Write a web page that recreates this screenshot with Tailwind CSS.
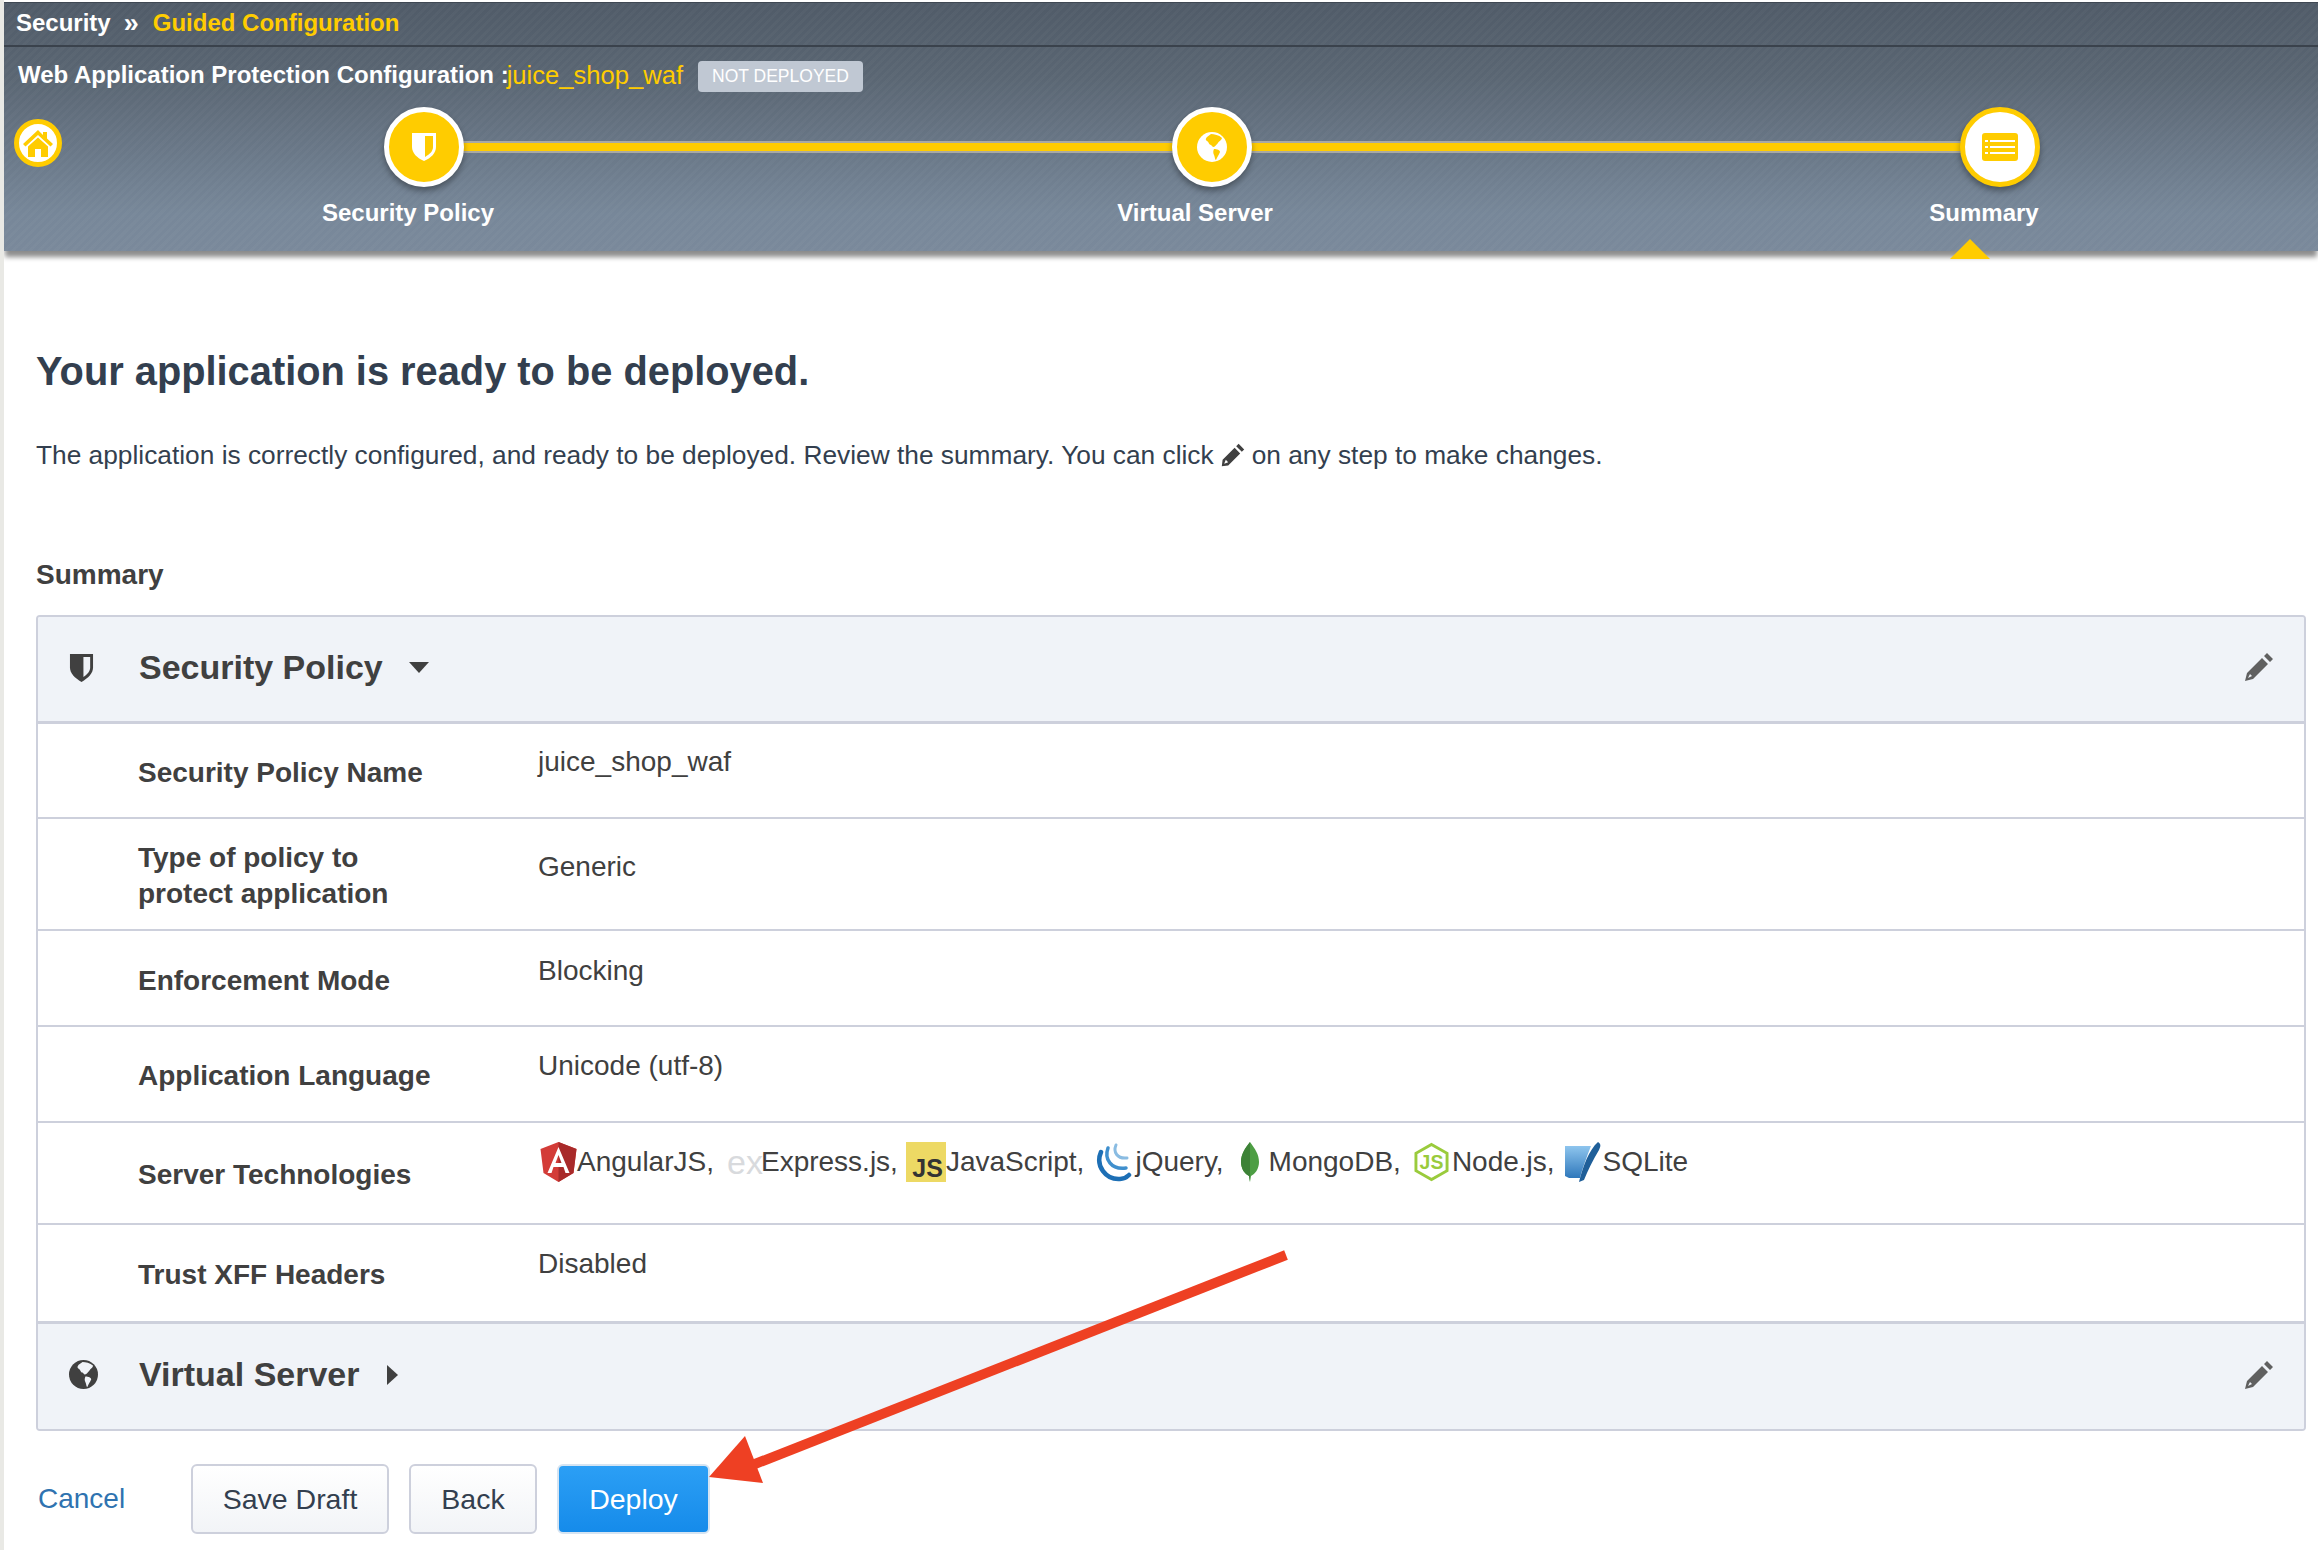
<!DOCTYPE html>
<html lang="en">
<head>
    <meta charset="UTF-8">
    <title>Guided Configuration</title>
    <script src="https://cdn.jsdelivr.net/npm/@tailwindcss/browser@4"></script>
</head>
<body class="bg-white">
<div class="relative w-[2318px] h-[1550px] overflow-hidden border-l-4 border-[#e9e9e5] bg-white font-['Liberation_Sans',Arial,sans-serif] antialiased text-[#404040]">

    <!-- Wizard header -->
    <header class="relative mt-[2px] h-[249px] border-t border-[#3f4853] text-white shadow-[0_7px_5px_-1px_rgba(0,0,0,0.45)] bg-[repeating-linear-gradient(135deg,rgba(255,255,255,0.025)_0,rgba(255,255,255,0.025)_3px,transparent_3px,transparent_6px),linear-gradient(180deg,#505b68_0%,#5a6673_30%,#778799_85%,#7a899b_100%)]">
        <div class="flex items-center h-[44px] pl-[12px] pb-[3px] border-b-2 border-[#3a424c] text-[24px] font-bold">
            <span>Security</span>
            <span class="ml-[13px] text-[27px] leading-[24px]">»</span>
            <span class="ml-[14px] text-[#ffcc00]">Guided Configuration</span>
        </div>
        <div class="flex items-center h-[44px] mt-[6px] pl-[14px] text-[24px]">
            <span class="font-bold">Web Application Protection Configuration :</span>
            <span class="-ml-[2px] text-[#ffcc00] text-[25.6px]">juice_shop_waf</span>
            <span class="ml-[15px] mt-[2px] flex items-center h-[31px] px-[14px] rounded-[4px] bg-[#c0c8d3] text-[17.5px] text-white">NOT DEPLOYED</span>
        </div>

        <!-- Steps -->
        <div class="flex items-center h-[80px] mt-[10px]">
            <div class="ml-[10px] w-[48px] h-[48px] -mt-[8px] rounded-full bg-white border-[5px] border-[#ffcc00] flex items-center justify-center">
                <svg viewBox="0 0 32 32" class="w-[32px] h-[32px]" fill="#ffcc00"><path d="M16 3 1 17l2.5 2.500L16 8l12.500 11.500L31 17l-6-5.500V5h-4v3z"/><path d="M6 19.500 16 10.500l10 9V30h-7v-8h-6v8H6z"/></svg>
            </div>
            <div class="ml-[322px] w-[80px] h-[80px] rounded-full bg-[#ffcc00] border-[5px] border-white shadow-[0_4px_6px_rgba(0,0,0,0.35)] flex items-center justify-center shrink-0 z-10">
                <svg viewBox="0 0 26 30" class="w-[26px] h-[30px]"><path fill="white" d="M1 1h24v14c0 6-5 11-12 14C6 26 1 21 1 15z"/><path fill="#ffcc00" d="M14 4h8v11c0 4-3 7-8 10z"/></svg>
            </div>
            <div class="w-[710px] h-[12px] -mx-[1px] shrink-0 bg-[#ffcc00] border-y-2 border-[#a9a9a3]"></div>
            <div class="w-[80px] h-[80px] rounded-full bg-[#ffcc00] border-[5px] border-white shadow-[0_4px_6px_rgba(0,0,0,0.35)] flex items-center justify-center shrink-0 z-10">
                <svg viewBox="0 0 30 30" class="w-[30px] h-[30px]"><circle cx="15" cy="15" r="15" fill="white"/><path fill="#ffcc00" d="M14 2c3 0 8 1 11 4-1 3-3 3-4 5-2 2-3 4-5 4l-2-2c-2 0-2-3-4-4s-1-3 0-4z"/><path fill="#ffcc00" d="M17 17c3 0 6 1 6 3-1 3-3 5-4 8-1 0-1-3-2-5s-1-4 0-6z"/></svg>
            </div>
            <div class="w-[710px] h-[12px] -mx-[1px] shrink-0 bg-[#ffcc00] border-y-2 border-[#a9a9a3]"></div>
            <div class="w-[80px] h-[80px] rounded-full bg-white border-[5px] border-[#ffcc00] shadow-[0_4px_6px_rgba(0,0,0,0.35)] flex items-center justify-center shrink-0 z-10">
                <svg viewBox="0 0 36 28" class="w-[36px] h-[28px]"><rect width="36" height="28" rx="3" fill="#ffcc00"/><path fill="white" d="M3 7h3v2H3zm5 0h25v2H8zM3 13h3v2H3zm5 0h25v2H8zM3 19h3v2H3zm5 0h25v2H8z"/></svg>
            </div>
        </div>
        <div class="flex text-[24px] font-bold mt-[8px] ml-[254px]">
            <div class="w-[787px]"><span class="block w-[300px] text-center">Security Policy</span></div>
            <div class="w-[789px]"><span class="block w-[300px] text-center">Virtual Server</span></div>
            <div><span class="block w-[300px] text-center">Summary</span></div>
        </div>
        <div class="absolute left-[1946px] bottom-[-8px] w-0 h-0 border-x-[20px] border-x-transparent border-b-[20px] border-b-[#ffcc00]"></div>
    </header>

    <!-- Main content -->
    <main class="pl-[32px] pr-[12px]">
        <h1 class="mt-[98px] text-[39.8px] leading-[44px] font-bold text-[#333f4f]">Your application is ready to be deployed.</h1>
        <p class="mt-[44px] text-[26.3px] leading-[36px] text-[#333f4f] flex items-center">
            The application is correctly configured, and ready to be deployed. Review the summary. You can click
            <svg viewBox="0 0 30 30" class="mx-[7px] w-[24px] h-[24px]" fill="#404040"><path d="M22 1l7 7-3 3-7-7zM17 6l7 7L9 28l-8 1 1-8zM6 21l-2 5 5-2z"/></svg>
            on any step to make changes.
        </p>
        <h2 class="mt-[86px] text-[28px] leading-[32px] font-bold">Summary</h2>

        <section class="mt-[24px] border-2 border-[#cdd0dc] rounded-[4px] overflow-hidden">
            <div class="flex items-center h-[107px] pb-[4px] pl-[31px] pr-[30px] bg-[#f0f3f8] border-b-[3px] border-[#cdd0dc]">
                <svg viewBox="0 0 26 30" class="w-[25px] h-[29px]" fill="#404040"><path d="M1 1h24v14c0 6-5 11-12 15C6 26 1 21 1 15z"/><path fill="#f0f3f8" d="M15 4h7v11c0 4-3 7-7 10z"/></svg>
                <span class="ml-[45px] text-[34px] font-bold">Security Policy</span>
                <span class="ml-[26px] w-0 h-0 border-x-[10px] border-x-transparent border-t-[11px] border-t-[#404040]"></span>
                <svg viewBox="0 0 30 30" class="ml-auto w-[30px] h-[30px]" fill="#606060"><path d="M23 1l6 6-3 3-6-6zM18 6l6 6L9 27l-8 2 2-8zM6 22l-2 4 4-2z"/></svg>
            </div>

            <div class="grid grid-cols-[400px_1fr] items-center h-[95px] pl-[100px] border-b-2 border-[#cdd0dc]">
                <span class="pt-[4px] text-[28px] font-bold">Security Policy Name</span>
                <span class="text-[28px] mb-[18px]">juice_shop_waf</span>
            </div>
            <div class="grid grid-cols-[400px_1fr] items-center h-[112px] pl-[100px] border-b-2 border-[#cdd0dc]">
                <span class="pt-[4px] text-[28px] leading-[36px] font-bold">Type of policy to<br>protect application</span>
                <span class="text-[28px] mb-[14px]">Generic</span>
            </div>
            <div class="grid grid-cols-[400px_1fr] items-center h-[96px] pl-[100px] border-b-2 border-[#cdd0dc]">
                <span class="pt-[6px] text-[28px] font-bold">Enforcement Mode</span>
                <span class="text-[28px] mb-[15px]">Blocking</span>
            </div>
            <div class="grid grid-cols-[400px_1fr] items-center h-[96px] pl-[100px] border-b-2 border-[#cdd0dc]">
                <span class="pt-[4px] text-[28px] font-bold">Application Language</span>
                <span class="text-[28px] mb-[17px]">Unicode (utf-8)</span>
            </div>
            <div class="grid grid-cols-[400px_1fr] items-center h-[102px] pl-[100px] border-b-2 border-[#cdd0dc]">
                <span class="pt-[4px] text-[28px] font-bold">Server Technologies</span>
                <div class="flex items-center text-[28px] mb-[22px]">
                    <svg viewBox="0 0 36 40" class="ml-[2px] w-[37px] h-[40px] shrink-0"><path fill="#d33c38" d="M18 0 36 7l-3 24-15 9-15-9L0 7z"/><path fill="#a82a2a" d="M18 0 36 7l-3 24-15 9z"/><path fill="white" d="M18 5 7 31h4l2-6h10l2 6h4zm-3 16 3-8 3 8z"/></svg>
                    <span>AngularJS,</span>
                    <span class="ml-[13px] w-[34px] shrink-0 text-[34px] leading-[34px] text-[#d8dadd]">ex</span>
                    <span>Express.js,</span>
                    <span class="ml-[8px] w-[40px] h-[40px] shrink-0 bg-[#edd964] flex items-end justify-end pr-[3px] text-[25px] leading-[27px] font-bold text-[#333]">JS</span>
                    <span>JavaScript,</span>
                    <svg viewBox="0 0 36 40" class="ml-[12px] w-[36px] h-[40px] shrink-0" fill="none" stroke-linecap="round"><path stroke="#1d6fb5" stroke-width="4.500" d="M5 10C-1 24 10 38 24 37c4 0 7-2 9-4"/><path stroke="#3f8fcd" stroke-width="3.500" d="M12 6C8 17 15 28 30 26"/><path stroke="#8abce2" stroke-width="3" d="M20 3c-3 7 1 14 11 13"/></svg>
                    <span class="ml-[3px]">jQuery,</span>
                    <svg viewBox="0 0 18 40" class="ml-[17px] w-[18px] h-[40px] shrink-0"><path fill="#4d9e44" d="M9 0C14 7 18 12 18 20c0 7-4 12-8 14l-1 6-1-6C4 32 0 27 0 20 0 12 5 6 9 0z"/><path fill="#3d8237" d="M9 0C4 6 0 12 0 20c0 7 4 12 8 14l1 6z"/></svg>
                    <span class="ml-[10px]">MongoDB,</span>
                    <svg viewBox="0 0 36 40" class="ml-[13px] w-[35px] h-[40px] shrink-0" fill="none"><path stroke="#9acb3c" stroke-width="3" d="M18 2 34 11v18l-16 9-16-9V11z"/><text x="18" y="27" font-size="20" font-weight="700" text-anchor="middle" fill="#9acb3c">JS</text></svg>
                    <span class="ml-[3px]">Node.js,</span>
                    <svg viewBox="0 0 36 40" class="ml-[10px] w-[36px] h-[40px] shrink-0"><defs><linearGradient id="sqliteBlue" x1="0" y1="0" x2="0" y2="1"><stop offset="0" stop-color="#8ec5ee"/><stop offset="1" stop-color="#2f78bb"/></linearGradient></defs><path fill="url(#sqliteBlue)" d="M0 4h26c-4 10-9 24-11 32H4l-4-2z"/><path fill="#1f5f99" d="M33 0c3 2 3 4 1 8-6 10-11 20-15 30l-5 2C18 24 24 8 33 0z"/></svg>
                    <span class="ml-[2px]">SQLite</span>
                </div>
            </div>
            <div class="grid grid-cols-[400px_1fr] items-center h-[96px] pl-[100px]">
                <span class="pt-[3px] text-[28px] font-bold">Trust XFF Headers</span>
                <span class="text-[28px] mb-[18px]">Disabled</span>
            </div>

            <div class="flex items-center h-[108px] pb-[4px] pl-[31px] pr-[30px] bg-[#f0f3f8] border-t-[3px] border-[#cdd0dc]">
                <svg viewBox="0 0 30 30" class="w-[29px] h-[29px]"><circle cx="15" cy="15" r="15" fill="#404040"/><path fill="#f0f3f8" d="M14 2c3 0 8 1 11 4-1 3-3 3-4 5-2 2-3 4-5 4l-2-2c-2 0-2-3-4-4s-1-3 0-4z"/><path fill="#f0f3f8" d="M17 17c3 0 6 1 6 3-1 3-3 5-4 8-1 0-1-3-2-5s-1-4 0-6z"/></svg>
                <span class="ml-[41px] text-[34px] font-bold">Virtual Server</span>
                <span class="ml-[27px] w-0 h-0 border-y-[10px] border-y-transparent border-l-[11px] border-l-[#404040]"></span>
                <svg viewBox="0 0 30 30" class="ml-auto w-[30px] h-[30px]" fill="#606060"><path d="M23 1l6 6-3 3-6-6zM18 6l6 6L9 27l-8 2 2-8zM6 22l-2 4 4-2z"/></svg>
            </div>
        </section>

        <!-- Footer buttons -->
        <div class="flex items-center mt-[33px]">
            <a class="ml-[2px] w-[153px] text-[28px] text-[#2f73b0]">Cancel</a>
            <button class="w-[198px] h-[70px] rounded-[6px] border-2 border-[#cdd0dc] bg-gradient-to-b from-white to-[#f2f4f7] text-[28.5px] text-[#333f4f]">Save Draft</button>
            <button class="ml-[20px] w-[128px] h-[70px] rounded-[6px] border-2 border-[#cdd0dc] bg-gradient-to-b from-white to-[#f2f4f7] text-[28.5px] text-[#333f4f]">Back</button>
            <button class="ml-[20px] w-[153px] h-[70px] rounded-[6px] border-2 border-[#d5e4f2] bg-gradient-to-b from-[#2b9ff5] to-[#158bea] text-[28.5px] text-white">Deploy</button>
        </div>
    </main>

    <!-- Red annotation arrow -->
    <svg class="absolute left-0 top-0 w-[2314px] h-[1550px] pointer-events-none" viewBox="4 0 2314 1550">
        <path d="M1286 1255 750 1466" stroke="#ee4023" stroke-width="10" fill="none"/>
        <path d="M709 1477 745 1436 763 1483z" fill="#ee4023"/>
    </svg>
</div>
</body>
</html>
